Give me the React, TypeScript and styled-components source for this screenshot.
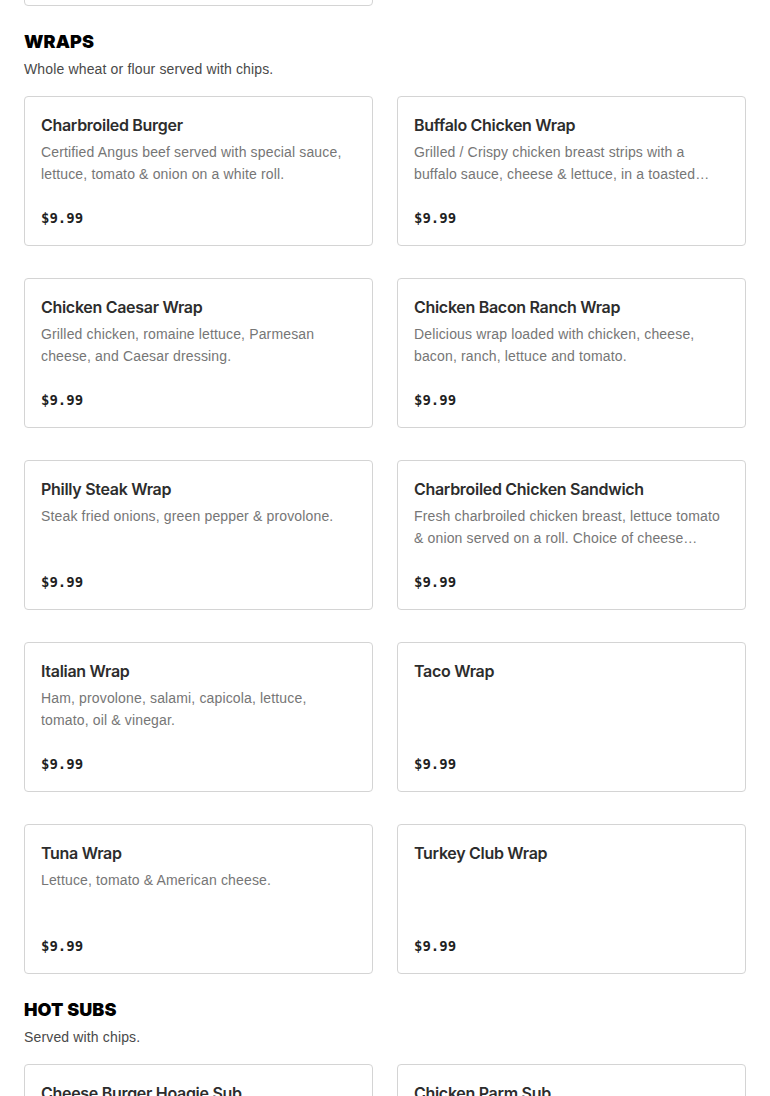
import React from 'react';
import styled, { createGlobalStyle } from 'styled-components';

type Item = { name: string; desc?: string; price: string };

const wraps: Item[] = [
  { name: 'Charbroiled Burger', desc: 'Certified Angus beef served with special sauce, lettuce, tomato & onion on a white roll.', price: '$9.99' },
  { name: 'Buffalo Chicken Wrap', desc: 'Grilled / Crispy chicken breast strips with a buffalo sauce, cheese & lettuce, in a toasted wrap with ranch dressing on the side.', price: '$9.99' },
  { name: 'Chicken Caesar Wrap', desc: 'Grilled chicken, romaine lettuce, Parmesan cheese, and Caesar dressing.', price: '$9.99' },
  { name: 'Chicken Bacon Ranch Wrap', desc: 'Delicious wrap loaded with chicken, cheese, bacon, ranch, lettuce and tomato.', price: '$9.99' },
  { name: 'Philly Steak Wrap', desc: 'Steak fried onions, green pepper & provolone.', price: '$9.99' },
  { name: 'Charbroiled Chicken Sandwich', desc: 'Fresh charbroiled chicken breast, lettuce tomato & onion served on a roll. Choice of cheese available on request.', price: '$9.99' },
  { name: 'Italian Wrap', desc: 'Ham, provolone, salami, capicola, lettuce, tomato, oil & vinegar.', price: '$9.99' },
  { name: 'Taco Wrap', price: '$9.99' },
  { name: 'Tuna Wrap', desc: 'Lettuce, tomato & American cheese.', price: '$9.99' },
  { name: 'Turkey Club Wrap', price: '$9.99' },
];

const hotSubs: Item[] = [
  { name: 'Cheese Burger Hoagie Sub', desc: 'Burger patties, American cheese, lettuce, tomato & onion.', price: '$9.99' },
  { name: 'Chicken Parm Sub', desc: 'Crispy chicken, marinara sauce & melted mozzarella.', price: '$9.99' },
];

const GlobalStyle = createGlobalStyle`
  body {
    margin: 0;
    background: #ffffff;
    font-family: "Liberation Sans", Arial, sans-serif;
    overflow: hidden;
  }
`;

const Page = styled.main`
  padding: 0 24px;
  height: 1096px;
  overflow: hidden;
`;

const PrevRow = styled.div`
  margin-top: -144px;
`;

const Section = styled.section`
  margin-top: 24px;
`;

const Heading = styled.h2`
  margin: 0;
  font-family: Inter, "Liberation Sans", sans-serif;
  font-size: 18px;
  font-weight: 900;
  line-height: 24px;
  letter-spacing: 0.1px;
  color: #000000;
`;

const Subtitle = styled.p`
  margin: 5px 0 0;
  font-size: 14px;
  line-height: 20px;
  letter-spacing: 0.15px;
  color: #494949;
`;

const Grid = styled.div<{ $flush?: boolean }>`
  display: grid;
  grid-template-columns: 1fr 1fr;
  column-gap: 24px;
  row-gap: 32px;
  margin-top: ${(p) => (p.$flush ? '0' : '17px')};
`;

const Card = styled.article`
  box-sizing: border-box;
  height: 150px;
  border: 1px solid #d4d4d4;
  border-radius: 4px;
  padding: 16px;
  display: flex;
  flex-direction: column;
`;

const Name = styled.h3`
  margin: 0;
  font-family: Inter, "Liberation Sans", sans-serif;
  font-size: 16px;
  font-weight: 600;
  line-height: 24px;
  letter-spacing: -0.3px;
  color: #2d2d2d;
  white-space: nowrap;
  overflow: hidden;
  text-overflow: ellipsis;
`;

const Desc = styled.p`
  margin: 4px 0 0;
  font-size: 14px;
  line-height: 22px;
  letter-spacing: 0.15px;
  color: #767676;
  display: -webkit-box;
  -webkit-line-clamp: 2;
  -webkit-box-orient: vertical;
  overflow: hidden;
`;

const Price = styled.span`
  margin-top: auto;
  font-family: "DejaVu Sans Mono", "Liberation Mono", monospace;
  font-size: 14px;
  font-weight: 700;
  line-height: 22px;
  color: #1f1f1f;
`;

const MenuCard = ({ item }: { item: Item }) => (
  <Card>
    <Name>{item.name}</Name>
    {item.desc && <Desc>{item.desc}</Desc>}
    <Price>{item.price}</Price>
  </Card>
);

const MenuSection = ({ title, note, items }: { title: string; note: string; items: Item[] }) => (
  <Section>
    <Heading>{title}</Heading>
    <Subtitle>{note}</Subtitle>
    <Grid>
      {items.map((it) => (
        <MenuCard key={it.name} item={it} />
      ))}
    </Grid>
  </Section>
);

export default function App() {
  return (
    <>
      <GlobalStyle />
      <Page>
        <PrevRow>
          <Grid $flush>
            <MenuCard item={{ name: 'Meatball Wrap', desc: 'Meatballs, marinara & mozzarella.', price: '$9.99' }} />
          </Grid>
        </PrevRow>
        <MenuSection title="WRAPS" note="Whole wheat or flour served with chips." items={wraps} />
        <MenuSection title="HOT SUBS" note="Served with chips." items={hotSubs} />
      </Page>
    </>
  );
}
